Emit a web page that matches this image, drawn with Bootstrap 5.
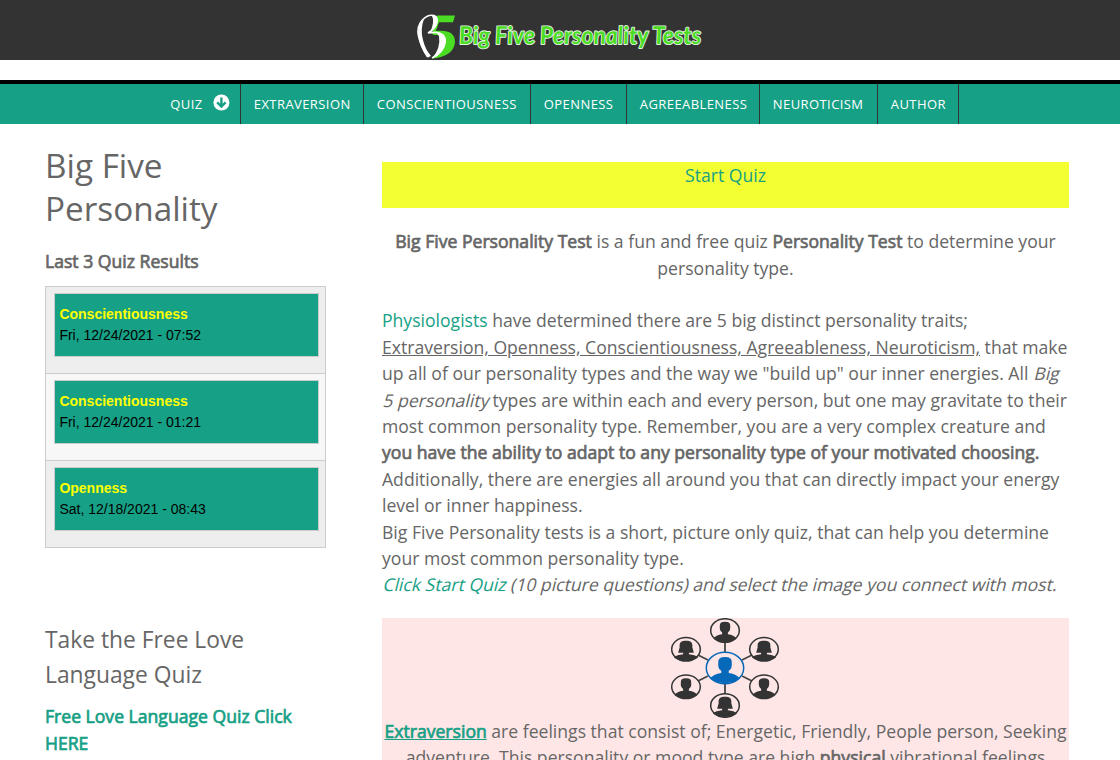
<!DOCTYPE html>
<html lang="en">
<head>
<meta charset="utf-8">
<meta name="viewport" content="width=device-width, initial-scale=1">
<title>Big Five Personality Tests</title>
<link href="https://cdn.jsdelivr.net/npm/bootstrap@5.3.0/dist/css/bootstrap.min.css" rel="stylesheet">
<style>
body{font-family:"Open Sans",sans-serif;font-size:17.6px;line-height:26.4px;color:#666;background:#fff;height:760px;overflow:hidden}
a{color:#16a085;text-decoration:none}
b{font-weight:400;-webkit-text-stroke:.7px currentColor}
.slant{display:inline-block;transform:translateX(2px) skewX(-14deg)}
.masthead{height:60px;background:#333}
.mainmenu{margin-top:20px;height:44px;border-top:4px solid #000;background:#16a085;padding-left:157px}
.mainmenu .nav-link{height:40px;padding:0 0 0 12.8px;border-right:1px solid #333;color:#fff;font-size:13px;letter-spacing:.42px;line-height:41px;white-space:nowrap;border-radius:0}
.mainmenu .w-quiz{width:84px;padding-left:13.3px}
.w-ext{width:123px}.w-con{width:167px}.w-ope{width:96px}.w-agr{width:133px}.w-neu{width:118px}.w-aut{width:81px}
.page{padding-left:45px}
.side{width:281px;margin-right:56px;padding-top:20px}
.content{width:687px;padding-top:38px;white-space:nowrap}
h1{font-size:33.3px;line-height:43px;font-weight:400;margin:0}
.recent{margin-top:18px}
.results{border:1px solid #ccc;font:14px/21px "Liberation Sans",sans-serif;color:#000;margin-top:11.6px}
.result-row{height:87px;padding:6px 6px 0 8px;background:#eee;border-bottom:1px solid #ccc}
.result-row:nth-child(2){background:#f7f7f7}
.result-row:last-child{border-bottom:0;height:86px}
.result-box{height:64px;border:1px solid #ccc;background:#16a085;padding:10px 4.4px}
.result-box strong{color:#ff0;display:block}
h3{font-size:22.8px;line-height:35px;font-weight:400;margin:74px 0 11.4px}
.start{height:46px;background:#f3ff33;margin-bottom:20.2px}
.trait{background:#ffe6e6;margin-top:20.2px;height:160px}
.trait svg{display:block;margin:0 auto}
</style>
</head>
<body>
<header class="masthead">
<svg width="1120" height="60" role="img" aria-label="Big Five Personality Tests">
<path d="M437 15.5H455L453 22.3H439L436 31Q455 29 455 42Q454 56 433 58.5L433 56.5Q444 52 445 42Q445 34 434 35L432 34Z" fill="#4bdc24"/>
<path d="M429 57Q421 47 418.500 36C415.500 23 426 14 434 15.5C440 18 437 28 428 33C439 31 446 34 445 42Q443 53 432 58" fill="none" stroke="#fff" stroke-width="1.6"/>
<path d="M431 56L427 57.500Q419 46 418 34Q418 24 424 19Q420 29 423 40Q425 49 431 56Z" fill="#fff"/>
<path d="M434 15Q440 18 436 27L430 33Q435 21 432 16ZM436 32Q449 35 445 46Q441 55 432 58.5Q441 48 439 36Z" fill="#fff"/>
<text transform="translate(459.5 44) skewX(4)" x="0" y="0" textLength="242" lengthAdjust="spacingAndGlyphs" font-family="Lato" font-style="italic" font-weight="700" font-size="24.500" fill="#4bdc24" stroke="#e8f5e4" stroke-width="1.8" stroke-linejoin="round" paint-order="stroke">Big Five Personality Tests</text>
</svg>
</header>
<nav class="mainmenu nav flex-nowrap">
<a class="nav-link w-quiz d-flex" href="#"><span>QUIZ</span><svg class="ms-2" width="20" height="38" viewBox="0 0 20 38"><circle cx="10.400" cy="18.500" r="8" fill="#fff"/><path d="M10.400 13.500V22M6.200 18.300L10.400 22.500L14.600 18.300" stroke="#16a085" stroke-width="2.4" fill="none"/></svg></a>
<a class="nav-link w-ext" href="#">EXTRAVERSION</a>
<a class="nav-link w-con" href="#">CONSCIENTIOUSNESS</a>
<a class="nav-link w-ope" href="#">OPENNESS</a>
<a class="nav-link w-agr" href="#">AGREEABLENESS</a>
<a class="nav-link w-neu" href="#">NEUROTICISM</a>
<a class="nav-link w-aut" href="#">AUTHOR</a>
</nav>
<main class="page d-flex">
<aside class="side">
<h1>Big Five<br>Personality</h1>
<div class="recent"><b>Last 3 Quiz Results</b></div>
<div class="results">
<div class="result-row"><div class="result-box"><strong>Conscientiousness</strong>Fri, 12/24/2021 - 07:52</div></div>
<div class="result-row"><div class="result-box"><strong>Conscientiousness</strong>Fri, 12/24/2021 - 01:21</div></div>
<div class="result-row"><div class="result-box"><strong>Openness</strong>Sat, 12/18/2021 - 08:43</div></div>
</div>
<h3>Take the Free Love<br>Language Quiz</h3>
<a href="#"><b>Free Love Language Quiz Click<br>HERE</b></a>
</aside>
<section class="content">
<div class="start text-center"><a href="#">Start Quiz</a></div>
<p class="text-center mb-0"><b>Big Five Personality Test</b> is a fun and free quiz <b>Personality Test</b> to determine your<br>personality type.</p>
<br>
<div><a href="#">Physiologists</a> have determined there are 5 big distinct personality traits;<br>
<u>Extraversion, Openness, Conscientiousness, Agreeableness, Neuroticism,</u> that make<br>
up all of our personality types and the way we "build up" our inner energies. All <span class="slant">Big</span><br>
<span class="slant">5 personality</span> types are within each and every person, but one may gravitate to their<br>
most common personality type. Remember, you are a very complex creature and<br>
<b>you have the ability to adapt to any personality type of your motivated choosing.</b><br>
Additionally, there are energies all around you that can directly impact your energy<br>
level or inner happiness.<br>
Big Five Personality tests is a short, picture only quiz, that can help you determine<br>
your most common personality type.<br>
<span class="slant"><a href="#">Click Start Quiz</a> (10 picture questions) and select the image you connect with most.</span></div>
<div class="trait text-center">
<svg width="112" height="100" viewBox="0 0 112 100">
<defs>
<g id="man"><path d="M-4.500-6Q-5-11 0-11T4.500-6Q5-1 2.500 1V3Q8 4 10 8Q6 12 0 12T-10 8Q-8 4-2.500 3V1Q-5-1-4.500-6Z"/></g>
<g id="woman"><path d="M-5.500-3C-6-9-4-10.500 0-10.500S6-9 5.500-3L6.800 3H2.500V4.800Q8 5.500 10.500 8.500Q6 12.500 0 12.500T-10.500 8.500Q-8 5.500-2.500 4.800V3H-6.800Z"/></g>
</defs>
<path d="M55 24V35M55 66V76M28 37L38 42M72 42L82 37M28 63L38 58M72 58L82 63" stroke="#444" stroke-width="1.8"/>
<g fill="none" stroke="#333" stroke-width="1.5"><ellipse cx="55" cy="12.500" rx="14.300" ry="11.800"/><ellipse cx="16" cy="31.300" rx="14.300" ry="11.800"/><ellipse cx="94" cy="31.300" rx="14.300" ry="11.800"/><ellipse cx="16" cy="68.800" rx="14.300" ry="11.800"/><ellipse cx="94" cy="68.800" rx="14.300" ry="11.800"/><ellipse cx="55" cy="87.500" rx="14.300" ry="11.800"/><ellipse cx="55" cy="50" rx="18.700" ry="15.700" stroke="#0869ba"/></g>
<g fill="#333"><use href="#man" transform="translate(55 13.500) scale(1.15 .88)"/><use href="#woman" transform="translate(16 32) scale(1.15 .88)"/><use href="#woman" transform="translate(94 32) scale(1.15 .88)"/><use href="#man" transform="translate(16 70) scale(1.15 .88)"/><use href="#man" transform="translate(94 70) scale(1.15 .88)"/><use href="#woman" transform="translate(55 88) scale(1.15 .88)"/></g>
<use href="#man" fill="#0869ba" transform="translate(55 51.500) scale(1.5 1.14)"/>
</svg>
<div><a href="#"><b><u>Extraversion</u></b></a> are feelings that consist of; Energetic, Friendly, People person, Seeking<br>adventure. This personality or mood type are high <b>physical</b> vibrational feelings</div>
</div>
</section>
</main>
<script src="https://cdn.jsdelivr.net/npm/bootstrap@5.3.0/dist/js/bootstrap.bundle.min.js"></script>
</body>
</html>
